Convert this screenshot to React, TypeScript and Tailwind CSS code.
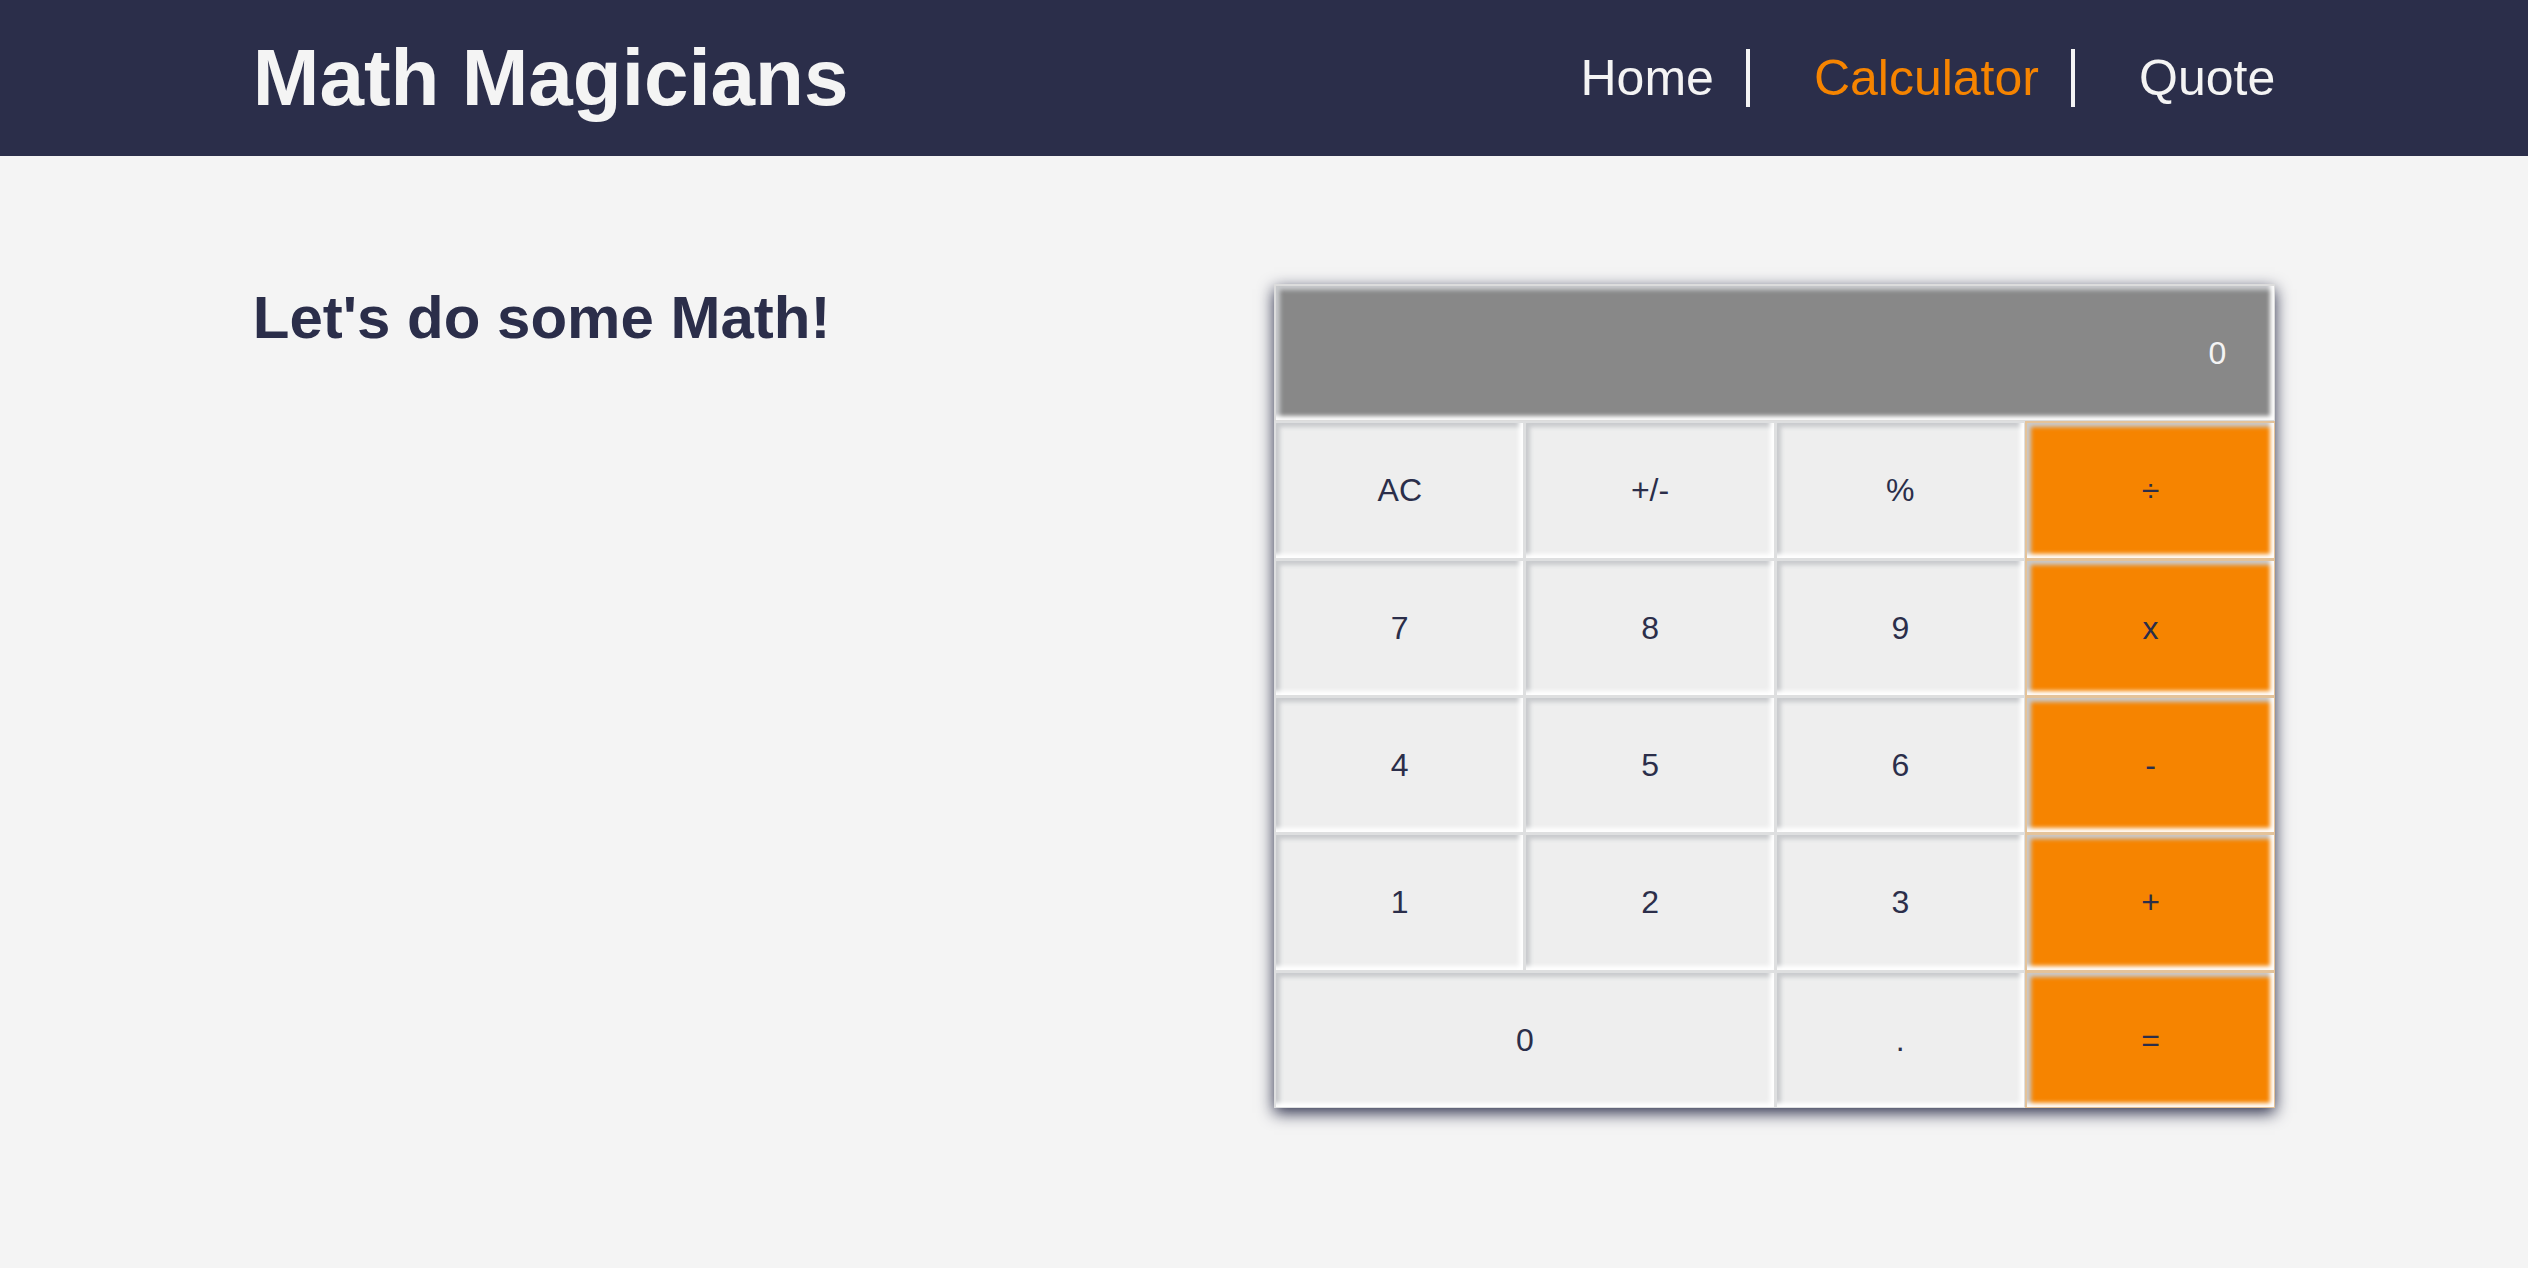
const keys = [
  'AC', '+/-', '%', '÷',
  '7', '8', '9', 'x',
  '4', '5', '6', '-',
  '1', '2', '3', '+',
  '0', '.', '=',
];
const operators = ['÷', 'x', '-', '+', '='];

const bevel =
  'border-t-2 border-l-2 border-r border-b shadow-[inset_-4px_-4px_4px_#fff,inset_4px_4px_4px_#c8cacd]';

function Key({ label }: { label: string }) {
  const tone = operators.includes(label)
    ? 'border-[#e4c39a] bg-[#f68400]'
    : 'border-[#dedfe0] bg-[#eee]';
  const span = label === '0' ? 'col-span-2' : '';
  return (
    <button type="button" className={`${bevel} ${tone} ${span}`}>
      {label}
    </button>
  );
}

export default function App() {
  return (
    <div className="min-h-screen bg-[#f4f4f4] font-['Liberation_Sans',Arial,sans-serif] text-[#2b2e4a]">
      <header className="flex items-center justify-between bg-[#2b2e4a] px-[10%] py-8 text-[#f4f4f4]">
        <h1 className="text-[80px] leading-[92px] font-bold">Math Magicians</h1>
        <nav>
          <ul className="flex text-[50px] leading-[58px]">
            <li className="mr-16 border-r-4 border-[#f4f4f4] pr-8">
              <a href="#home">Home</a>
            </li>
            <li className="mr-16 border-r-4 border-[#f4f4f4] pr-8">
              <a href="#calculator" aria-current="page" className="text-[#f68400]">Calculator</a>
            </li>
            <li>
              <a href="#quote">Quote</a>
            </li>
          </ul>
        </nav>
      </header>
      <main className="flex items-start justify-between px-[10%] py-32">
        <h2 className="text-[60px] leading-[68px] font-bold">Let&apos;s do some Math!</h2>
        <section
          aria-label="Calculator"
          className="grid min-h-[824px] w-[49.5%] auto-rows-fr grid-cols-4 text-[32px] shadow-[0_5px_15px_#2b2e4a]"
        >
          <output className={`${bevel} col-span-4 flex items-center justify-end border-[#dcdcdc] bg-[#888] px-12 text-[#f4f4f4]`}>
            0
          </output>
          {keys.map((label) => (
            <Key key={label} label={label} />
          ))}
        </section>
      </main>
    </div>
  );
}
